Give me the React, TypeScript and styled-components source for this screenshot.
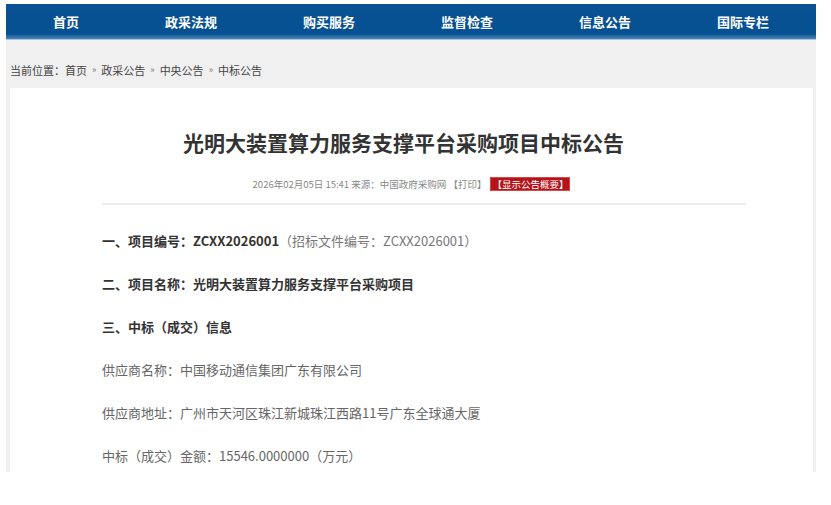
import React from "react";
import styled, { createGlobalStyle } from "styled-components";

const GlobalStyle = createGlobalStyle`
  html, body { margin: 0; padding: 0; background: #ffffff; }
  body { font-family: "Noto Sans CJK SC", "Noto Sans", sans-serif; }
  * { box-sizing: border-box; }
`;

const Page = styled.div`
  width: 810px;
  margin: 4px 0 0 6px;
`;

const NavBar = styled.nav`
  display: flex;
  align-items: center;
  height: 36px;
  padding-left: 4px;
  background: linear-gradient(#0a5294 0%, #045091 85%, #4f83b6 100%);
  border-bottom: 1px solid #a9c4de;
`;

const NavItem = styled.a`
  padding: 0 43px;
  color: #ffffff;
  font-size: 13px;
  font-weight: 700;
  line-height: 34px;
  text-decoration: none;
  white-space: nowrap;
`;

const Main = styled.div`
  background: #f0f0f0;
  padding: 0 3px 0 4px;
  height: 432px;
  display: flex;
  flex-direction: column;
`;

const Breadcrumb = styled.div`
  flex: none;
  height: 48px;
  padding-top: 11px;
  display: flex;
  align-items: center;
  font-size: 11px;
  color: #444;
  white-space: nowrap;
`;

const Sep = styled.span`
  margin: 0 5px;
  color: #777;
  font-size: 9px;
`;

const Panel = styled.section`
  flex: 1;
  min-height: 0;
  overflow: hidden;
  background: #ffffff;
  padding-top: 39px;
`;

const Title = styled.h1`
  margin: 0;
  padding-right: 16px;
  text-align: center;
  font-size: 21px;
  line-height: 30px;
  font-weight: 700;
  color: #333;
  white-space: nowrap;
`;

const Meta = styled.div`
  margin-top: 20px;
  display: flex;
  justify-content: center;
  align-items: center;
  gap: 4px;
  font-size: 9.5px;
  line-height: 14px;
  color: #888;
  white-space: nowrap;
`;

const Badge = styled.span`
  background: #b3141c;
  color: #ffffff;
  font-size: 9.5px;
  line-height: 12px;
  padding: 0 1px;
  border: 1px solid #d44;
`;

const Rule = styled.hr`
  margin: 12px 0 0 92px;
  width: 644px;
  height: 2px;
  border: 0;
  background: #eeeeee;
`;

const Body = styled.div`
  padding: 14px 0 0 92px;
`;

const Para = styled.p<{ $strong?: boolean }>`
  margin: 0;
  font-size: 13px;
  line-height: 43px;
  font-weight: ${(p) => (p.$strong ? 700 : 400)};
  color: ${(p) => (p.$strong ? "#333" : "#666")};
  white-space: nowrap;
`;

const Light = styled.span`
  font-weight: 400;
  color: #777;
`;

const navItems = ["首页", "政采法规", "购买服务", "监督检查", "信息公告", "国际专栏"];

export default function App() {
  return (
    <>
      <GlobalStyle />
      <Page>
        <NavBar>
          {navItems.map((n) => (
            <NavItem key={n}>{n}</NavItem>
          ))}
        </NavBar>
        <Main>
          <Breadcrumb>
            当前位置：首页<Sep>»</Sep>政采公告<Sep>»</Sep>中央公告<Sep>»</Sep>中标公告
          </Breadcrumb>
          <Panel>
            <Title>光明大装置算力服务支撑平台采购项目中标公告</Title>
            <Meta>
              <span>2026年02月05日 15:41 来源：中国政府采购网 【打印】</span>
              <Badge>【显示公告概要】</Badge>
            </Meta>
            <Rule />
            <Body>
              <Para $strong>
                一、项目编号：ZCXX2026001<Light>（招标文件编号：ZCXX2026001）</Light>
              </Para>
              <Para $strong>二、项目名称：光明大装置算力服务支撑平台采购项目</Para>
              <Para $strong>三、中标（成交）信息</Para>
              <Para>供应商名称：中国移动通信集团广东有限公司</Para>
              <Para>供应商地址：广州市天河区珠江新城珠江西路11号广东全球通大厦</Para>
              <Para>中标（成交）金额：15546.0000000（万元）</Para>
            </Body>
          </Panel>
        </Main>
      </Page>
    </>
  );
}
